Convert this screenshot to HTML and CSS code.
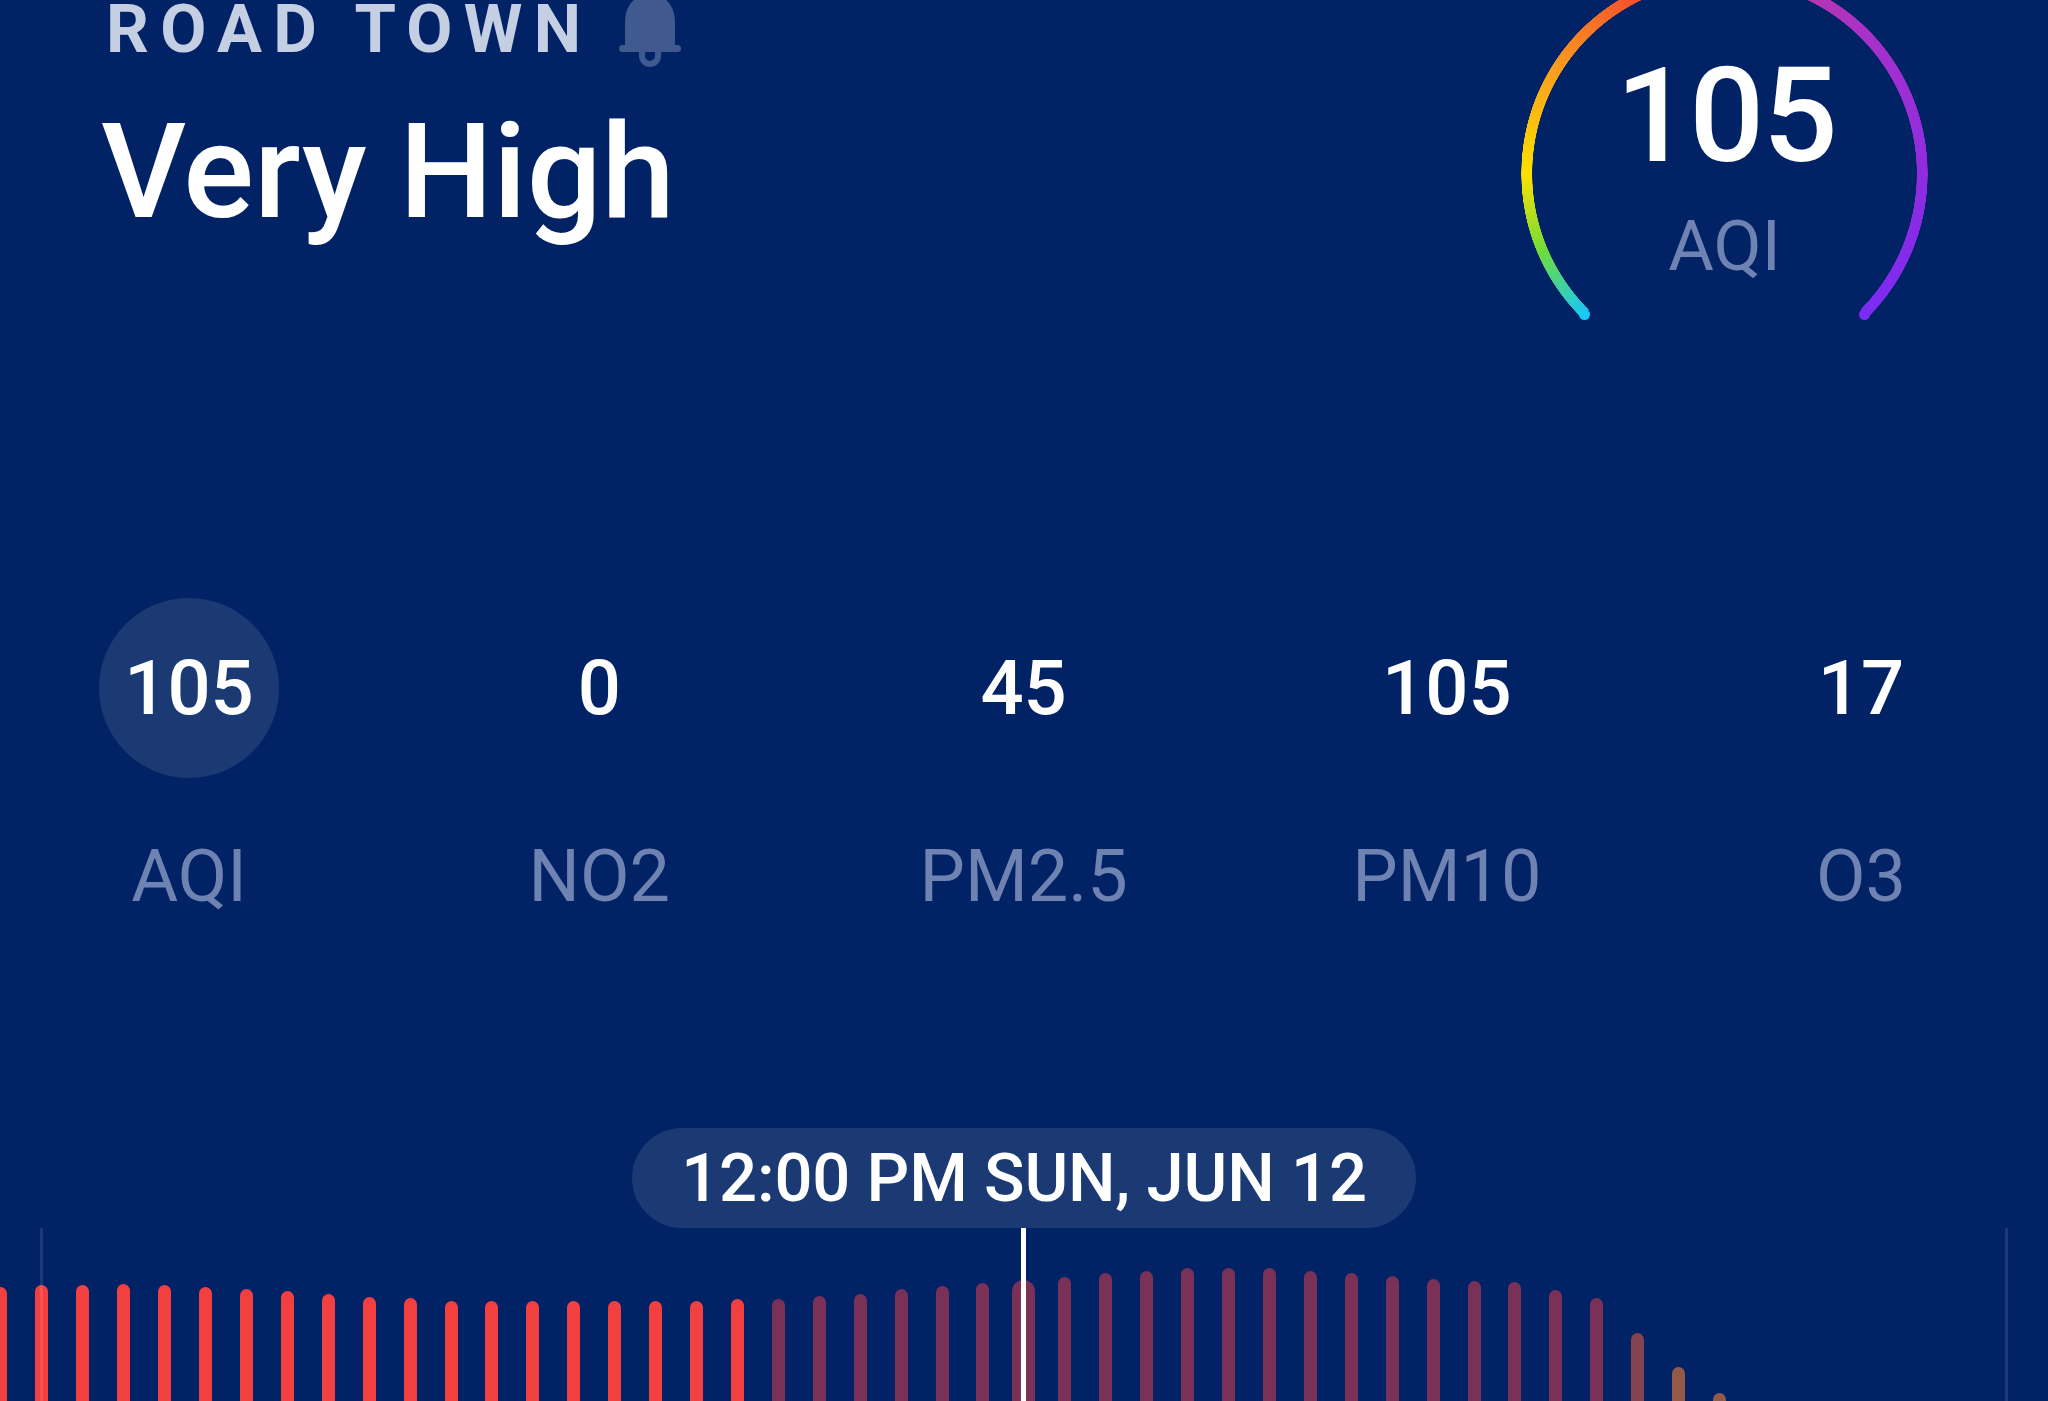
FILE: index.html
```html
<!DOCTYPE html>
<html lang="en">
<head>
    <meta charset="utf-8"/>
    <title>Air Quality</title>
    <link rel="stylesheet" href="styles.css">
</head>
<body>
    <div class="page">
        <div class="header">
            <div class="place">
                <div class="town-row">
                    <div class="town">ROAD TOWN</div>
                    <svg class="bell" viewBox="0 0 62 68" width="62" height="68">
                        <path d="M6 46V22C6 6 16 -6 31 -6S56 6 56 22V46Z" fill="#40598f"/>
                        <rect x="0" y="45" width="62" height="7" rx="3.5" fill="#40598f"/>
                        <path d="M23 52V56A8 8 0 0 0 39 56V52" fill="none" stroke="#40598f" stroke-width="6"/>
                    </svg>
                </div>
                <div class="level">Very High</div>
            </div>
            <div class="gauge">
                <div class="ring"></div>
                <div class="gauge-text">
                    <div class="gauge-value">105</div>
                    <div class="gauge-label">AQI</div>
                </div>
            </div>
        </div>

        <div class="metrics">
            <div class="metric active">
                <div class="value">105</div>
                <div class="label">AQI</div>
            </div>
            <div class="metric">
                <div class="value">0</div>
                <div class="label">NO2</div>
            </div>
            <div class="metric">
                <div class="value">45</div>
                <div class="label">PM2.5</div>
            </div>
            <div class="metric pm10">
                <div class="value">105</div>
                <div class="label">PM10</div>
            </div>
            <div class="metric">
                <div class="value">17</div>
                <div class="label">O3</div>
            </div>
        </div>

        <div class="time-row">
            <div class="time">12:00 PM SUN, JUN 12</div>
        </div>

        <div class="chart">
            <div class="slot"><div class="bar" style="height: 114px"></div></div>
            <div class="slot tick"><div class="bar" style="height: 116px"></div></div>
            <div class="slot"><div class="bar" style="height: 116px"></div></div>
            <div class="slot"><div class="bar" style="height: 117px"></div></div>
            <div class="slot"><div class="bar" style="height: 116px"></div></div>
            <div class="slot"><div class="bar" style="height: 114px"></div></div>
            <div class="slot"><div class="bar" style="height: 112px"></div></div>
            <div class="slot"><div class="bar" style="height: 110px"></div></div>
            <div class="slot"><div class="bar" style="height: 107px"></div></div>
            <div class="slot"><div class="bar" style="height: 104px"></div></div>
            <div class="slot"><div class="bar" style="height: 103px"></div></div>
            <div class="slot"><div class="bar" style="height: 100px"></div></div>
            <div class="slot"><div class="bar" style="height: 100px"></div></div>
            <div class="slot"><div class="bar" style="height: 100px"></div></div>
            <div class="slot"><div class="bar" style="height: 100px"></div></div>
            <div class="slot"><div class="bar" style="height: 100px"></div></div>
            <div class="slot"><div class="bar" style="height: 100px"></div></div>
            <div class="slot"><div class="bar" style="height: 100px"></div></div>
            <div class="slot"><div class="bar" style="height: 102px"></div></div>
            <div class="slot"><div class="bar later" style="height: 102px"></div></div>
            <div class="slot"><div class="bar later" style="height: 105px"></div></div>
            <div class="slot"><div class="bar later" style="height: 107px"></div></div>
            <div class="slot"><div class="bar later" style="height: 112px"></div></div>
            <div class="slot"><div class="bar later" style="height: 115px"></div></div>
            <div class="slot"><div class="bar later" style="height: 118px"></div></div>
            <div class="slot now"><div class="bar later wide" style="height: 121px"></div></div>
            <div class="slot"><div class="bar later" style="height: 124px"></div></div>
            <div class="slot"><div class="bar later" style="height: 128px"></div></div>
            <div class="slot"><div class="bar later" style="height: 130px"></div></div>
            <div class="slot"><div class="bar later" style="height: 133px"></div></div>
            <div class="slot"><div class="bar later" style="height: 133px"></div></div>
            <div class="slot"><div class="bar later" style="height: 133px"></div></div>
            <div class="slot"><div class="bar later" style="height: 130px"></div></div>
            <div class="slot"><div class="bar later" style="height: 128px"></div></div>
            <div class="slot"><div class="bar later" style="height: 125px"></div></div>
            <div class="slot"><div class="bar later" style="height: 122px"></div></div>
            <div class="slot"><div class="bar later" style="height: 120px"></div></div>
            <div class="slot"><div class="bar later" style="height: 119px"></div></div>
            <div class="slot"><div class="bar later" style="height: 111px"></div></div>
            <div class="slot"><div class="bar later" style="height: 103px"></div></div>
            <div class="slot"><div class="bar moderate" style="height: 68px"></div></div>
            <div class="slot"><div class="bar good" style="height: 34px"></div></div>
            <div class="slot"><div class="bar good" style="height: 8px"></div></div>
            <div class="slot"></div>
            <div class="slot"></div>
            <div class="slot"></div>
            <div class="slot"></div>
            <div class="slot"></div>
            <div class="slot"></div>
            <div class="slot tick"></div>
        </div>
    </div>
</body>
</html>
```

FILE: styles.css
```css
body {
    margin: 0;
    background-color: #012366;
    font-family: Roboto, "Liberation Sans", sans-serif;
}
.page {
    height: 1401px;
    overflow: hidden;
    background-color: #012366;
}

/* top part */
.header {
    display: flex;
    justify-content: space-between;
    align-items: flex-start;
    height: 598px;
    padding-left: 101px;
    padding-right: 120px;
}
.town-row {
    display: flex;
    align-items: flex-start;
    gap: 27px;
    margin-left: 5px;
}
.town {
    margin-top: 1px;
    font-size: 67px;
    line-height: 56px;
    font-weight: 700;
    letter-spacing: 11.3px;
    color: #c5cfe3;
}
.level {
    margin-top: 38px;
    font-size: 132px;
    line-height: 132px;
    font-weight: 500;
    color: #fff;
}

/* gauge, the top of the ring runs off the screen */
.gauge {
    position: relative;
    width: 407px;
    height: 407px;
    margin-top: -30.5px;
    display: grid;
}
.ring {
    grid-area: 1 / 1;
    border-radius: 50%;
    background: conic-gradient(from 225deg,
        #18c8f5 0deg,
        #6fdc3a 22deg,
        #ffe000 45deg,
        #f89a20 78deg,
        #f4512c 107deg,
        #b535b5 163deg,
        #a22fcf 190deg,
        #8f2ce0 225deg,
        #7b2bf2 270deg,
        transparent 270deg);
    -webkit-mask: radial-gradient(closest-side, transparent calc(100% - 11.5px), #000 calc(100% - 11px), #000 calc(100% - 0.5px), transparent 100%);
    mask: radial-gradient(closest-side, transparent calc(100% - 11.5px), #000 calc(100% - 11px), #000 calc(100% - 0.5px), transparent 100%);
}
/* round ends of the ring */
.gauge::before, .gauge::after {
    content: "";
    position: absolute;
    top: 339px;
    width: 11px;
    height: 11px;
    border-radius: 50%;
}
.gauge::before {
    left: 58px;
    background-color: #18c8f5;
}
.gauge::after {
    left: 338px;
    background-color: #7b2bf2;
}
.gauge-text {
    grid-area: 1 / 1;
    padding-top: 80.5px;
    text-align: center;
}
.gauge-value {
    font-size: 132px;
    line-height: 132px;
    font-weight: 500;
    letter-spacing: -1.5px;
    margin-left: 3px;
    color: #fff;
}
.gauge-label {
    margin-top: 30px;
    font-size: 70px;
    line-height: 68px;
    color: #6f83b3;
}

/* pollutant row */
.metrics {
    display: flex;
    justify-content: space-between;
    padding-left: 99px;
    padding-right: 142px;
}
.metric {
    display: flex;
    flex-direction: column;
    align-items: center;
}
.metric.pm10 {
    margin-left: -25px;
    margin-right: 25px;
}
.metric .value {
    height: 180px;
    display: flex;
    justify-content: center;
    align-items: center;
    font-size: 76px;
    font-weight: 500;
    color: #fff;
}
.metric.active .value {
    width: 180px;
    border-radius: 50%;
    background-color: #1b3a73;
}
.metric .label {
    margin-top: 62px;
    font-size: 72px;
    line-height: 74px;
    color: #6f83b3;
}

/* selected time */
.time-row {
    display: flex;
    justify-content: center;
    margin-top: 214px;
}
.time {
    width: 784px;
    height: 100px;
    border-radius: 50px;
    background-color: #1b3a73;
    text-align: center;
    font-size: 67px;
    line-height: 100px;
    font-weight: 500;
    letter-spacing: -0.2px;
    color: #fff;
}

/* bars */
.chart {
    display: flex;
    height: 173px;
    margin-left: -19.6px;
}
.slot {
    position: relative;
    flex: 0 0 40.93px;
    display: flex;
    justify-content: center;
    align-items: flex-end;
}
.bar {
    width: 13px;
    border-radius: 6.5px 6.5px 0 0;
    background-color: #f24040;
}
.bar.later {
    background-color: #7a3158;
}
.bar.moderate {
    background-color: #85434f;
}
.bar.good {
    background-color: #95594a;
}
.bar.wide {
    width: 23px;
    border-radius: 11.5px 11.5px 0 0;
}
.slot.tick::after, .slot.now::after {
    content: "";
    position: absolute;
    top: 0;
    bottom: 0;
    left: 50%;
    width: 3px;
    margin-left: -1.5px;
    background-color: rgba(255, 255, 255, 0.1);
}
.slot.now::after {
    width: 5px;
    margin-left: -3px;
    background-color: #fff;
}
```
